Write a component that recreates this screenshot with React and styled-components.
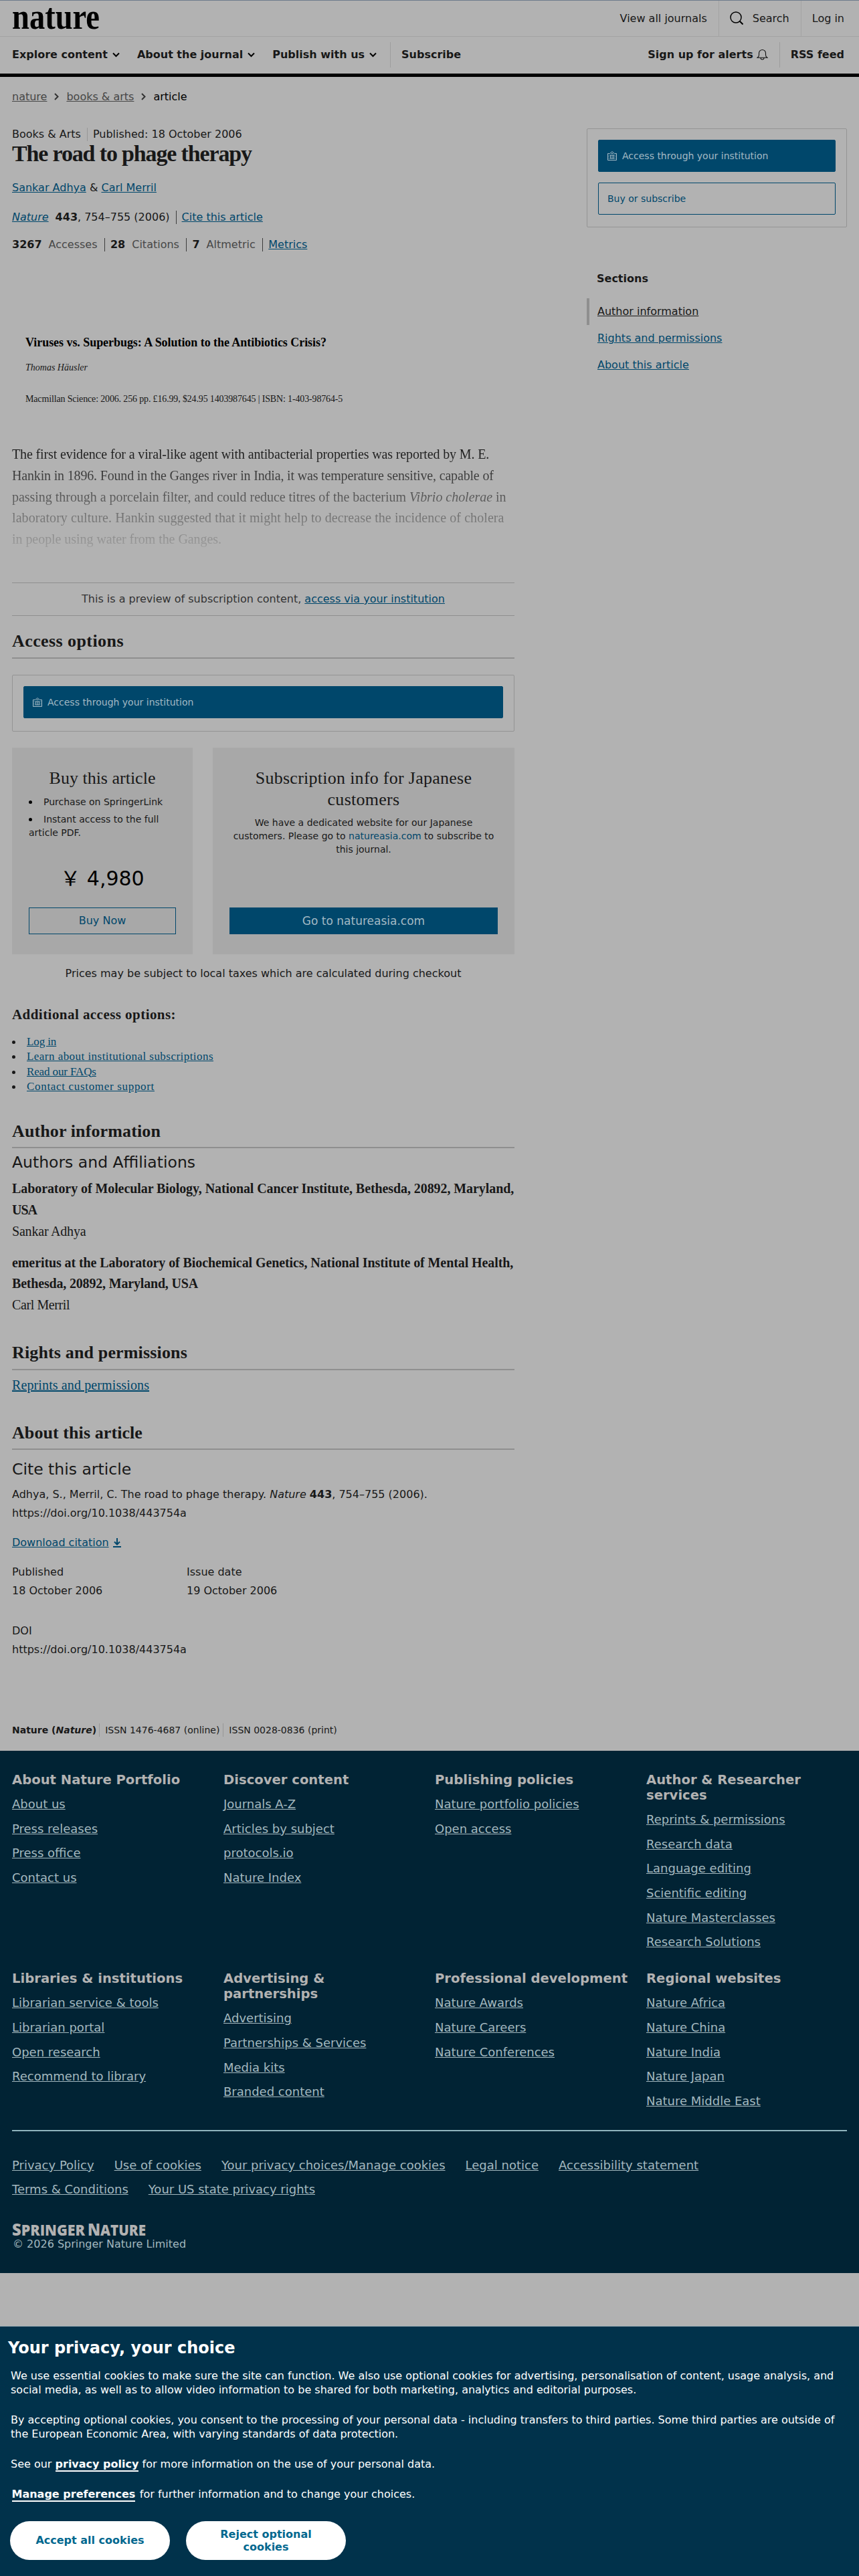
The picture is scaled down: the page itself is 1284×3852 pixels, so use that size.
import React from 'react';
import styled, { createGlobalStyle, css } from 'styled-components';

const GlobalStyle = createGlobalStyle`
  * {
    box-sizing: border-box;
  }
  body {
    height: 100vh;
    margin: 0;
    overflow: hidden;
    background: #b2b2b2;
    color: #181818;
    font-family: 'DejaVu Sans', sans-serif;
    font-size: 16px;
  }
  h1, h2, h3, h4, p, ul {
    margin: 0;
    padding: 0;
  }
  ul {
    list-style: none;
  }
`;

const serif = css`
  font-family: 'Liberation Serif', serif;
`;

const Link = styled.a`
  color: #00476b;
  text-decoration: ${({ $plain }) => ($plain ? 'none' : 'underline')};
`;

const Header = styled.header`
  border-top: 1px solid #6d7c8c;
  border-bottom: 5px solid #000;
`;

const TopBar = styled.div`
  display: flex;
  justify-content: space-between;
  height: 54px;
  padding-left: 18px;
  border-bottom: 1px solid #a3a3a3;
`;

const Logo = styled.svg`
  display: block;
  width: 136px;
  height: 50px;
`;

const TopLinks = styled.div`
  display: flex;
`;

const TopLink = styled.div`
  display: flex;
  align-items: center;
  gap: 14px;
  padding: 0 ${({ $last }) => ($last ? 22 : 17)}px 0 ${({ $first }) => ($first ? 0 : 16)}px;
  padding-bottom: 1px;
  border-left: ${({ $first }) => ($first ? 'none' : '1px solid #a3a3a3')};
`;

const NavBar = styled.nav`
  display: flex;
  align-items: center;
  height: 55px;
  padding: 0 22px 2px 18px;
  font-weight: bold;
`;

const NavItem = styled.div`
  display: flex;
  align-items: center;
  gap: ${({ $gap }) => $gap || 7}px;
  margin-right: ${({ $mr }) => $mr || 0}px;
  margin-left: ${({ $push }) => ($push ? 'auto' : 0)};
`;

const NavDivider = styled.span`
  width: 1px;
  height: 38px;
  margin-right: 16px;
  background: #9d9d9d;
`;

const Breadcrumbs = styled.div`
  display: flex;
  align-items: center;
  height: 24px;
  margin: 17px 18px 0;
  color: #000;

  a {
    color: #474747;
    text-decoration: underline;
  }
  svg {
    margin: 0 11px;
  }
`;

const Page = styled.div`
  display: grid;
  grid-template-columns: 751px 389px;
  justify-content: space-between;
  margin: 33px 18px 0;
`;

const MetaRow = styled.div`
  display: flex;
  align-items: center;
  line-height: ${({ $lh }) => $lh || 24}px;
  margin-top: ${({ $mt }) => $mt || 0}px;
  font-size: ${({ $size }) => $size || 16}px;
  white-space: pre;
`;

const Bar = styled.i`
  width: 1px;
  height: 20px;
  margin: 0 8px 0 ${({ $gap }) => $gap || 9}px;
  background: ${({ $light }) => ($light ? '#979797' : '#3c3c3c')};
`;

const Muted = styled.span`
  color: #474747;
  margin: 0 1.5px 0 10px;
`;

const Volume = styled.b`
  margin-left: 10px;
`;

const Title = styled.h1`
  ${serif}
  font-size: 34px;
  line-height: 36px;
  letter-spacing: -1.15px;
  white-space: nowrap;
`;

const Authors = styled.p`
  line-height: 24px;
  margin-top: 21px;
`;

const BookBox = styled.div`
  ${serif}
  margin-top: 122px;
  padding-left: 20px;
`;

const BookTitle = styled.h2`
  font-size: 18px;
  line-height: 24px;
  letter-spacing: -0.05px;
  color: #000;
`;

const BookLine = styled.p`
  font-size: ${({ $size }) => $size}px;
  line-height: 20px;
  margin-top: ${({ $mt }) => $mt}px;
  font-style: ${({ $italic }) => ($italic ? 'italic' : 'normal')};
  letter-spacing: ${({ $ls }) => $ls || 0}px;
`;

// the text fades out towards the paywall
const Preview = styled.p`
  ${serif}
  margin-top: 57px;
  font-size: 20px;
  line-height: 31.8px;
  background: linear-gradient(#181818, #181818 4%, #b2b2b2 112%);
  -webkit-background-clip: text;
  background-clip: text;
  color: transparent;
`;

const Line = styled.span`
  display: block;
  letter-spacing: ${({ $ls }) => $ls || 0}px;
  white-space: nowrap;
`;

const PreviewNote = styled.p`
  height: 50px;
  margin-top: 48px;
  border-top: 1px solid #8f8f8f;
  border-bottom: 1px solid #8f8f8f;
  line-height: 48px;
  text-align: center;
  color: #333;
`;

const SectionTitle = styled.h2`
  ${serif}
  margin-top: ${({ $mt }) => $mt}px;
  padding-bottom: ${({ $pb }) => $pb || 9}px;
  border-bottom: 2px solid #8f8f8f;
  font-size: 26px;
  line-height: 30px;
  letter-spacing: ${({ $ls }) => $ls || 0}px;
`;

const SubTitle = styled.h3`
  margin-top: ${({ $mt }) => $mt}px;
  font-size: 23.5px;
  font-weight: normal;
  line-height: 30px;
`;

const AccessBox = styled.div`
  display: flex;
  flex-direction: column;
  gap: 16px;
  margin-top: ${({ $mt }) => $mt}px;
  padding: 16px 16px ${({ $pb }) => $pb || 19}px;
  border: 1px solid #949494;
  border-radius: 2px;
`;

const AccessButton = styled.a`
  display: flex;
  align-items: center;
  gap: 8px;
  height: 48px;
  padding: 0 13px;
  border: 1px solid #00476b;
  border-radius: 2px;
  background: ${({ $outline }) => ($outline ? 'transparent' : '#00476b')};
  color: ${({ $outline }) => ($outline ? '#00476b' : '#a3b9c4')};
  font-size: 14px;
`;

const Offers = styled.div`
  display: grid;
  grid-template-columns: 270px 451px;
  justify-content: space-between;
  height: 309px;
  margin-top: 24px;
`;

const Offer = styled.div`
  display: flex;
  flex-direction: column;
  padding: 30px 25px;
  background: #a8a8a8;
  font-size: 14px;
  line-height: 20px;
  text-align: center;
`;

const OfferTitle = styled.h3`
  ${serif}
  font-size: 26px;
  font-weight: normal;
  line-height: 32px;
  letter-spacing: ${({ $ls }) => $ls || 0}px;
`;

const OfferList = styled.ul`
  margin-top: 9px;
  text-align: left;

  li {
    margin-bottom: 6px;
  }
  li::before {
    content: '';
    display: inline-block;
    width: 5px;
    height: 5px;
    margin-right: 17px;
    border-radius: 50%;
    background: #000;
    vertical-align: 2px;
  }
`;

const OfferText = styled.p`
  margin-top: 8px;
`;

const Price = styled.div`
  margin-top: 33px;
  color: #000;
  font-family: 'DejaVu Sans', 'Noto Sans CJK JP', sans-serif;
  font-size: 30px;
  line-height: 40px;
`;

const OfferButton = styled.button`
  height: 40px;
  margin-top: auto;
  border: 1px solid #00476b;
  background: ${({ $solid }) => ($solid ? '#00476b' : 'transparent')};
  color: ${({ $solid }) => ($solid ? '#a3b9c4' : '#00476b')};
  font-family: inherit;
  font-size: ${({ $solid }) => ($solid ? 17 : 16)}px;
`;

const PriceNote = styled.p`
  margin-top: 17px;
  line-height: 24px;
  text-align: center;
`;

const MoreTitle = styled.h3`
  ${serif}
  margin-top: 36px;
  font-size: 21px;
  line-height: 26px;
  letter-spacing: 0.45px;
`;

const MoreList = styled.ul`
  ${serif}
  margin-top: 17px;
  font-size: 17px;
  line-height: 22.3px;
`;

const MoreItem = styled.li`
  letter-spacing: ${({ $ls }) => $ls}px;

  &::before {
    content: '';
    display: inline-block;
    width: 5px;
    height: 5px;
    margin-right: 17px;
    border-radius: 50%;
    background: #181818;
    vertical-align: 2px;
  }
`;

const Affiliation = styled.div`
  ${serif}
  margin-top: ${({ $mt }) => $mt}px;
  font-size: 20px;
  line-height: 31.8px;
`;

const SerifText = styled.p`
  ${serif}
  margin-top: 6px;
  font-size: 20px;
  line-height: 32px;
  letter-spacing: 0.12px;
`;

const Text = styled.p`
  margin-top: ${({ $mt }) => $mt}px;
  line-height: 28px;
`;

const DownloadRow = styled.p`
  display: flex;
  align-items: center;
  gap: 6px;
  margin-top: 18px;
  line-height: 24px;
`;

const History = styled.div`
  display: grid;
  grid-template-columns: 261px 1fr;
  row-gap: 32px;
  margin-top: 18px;
  line-height: 28px;
`;

const Contents = styled.aside`
  margin-top: 65px;

  h2 {
    margin-left: 15px;
    font-size: 16px;
    line-height: 24px;
  }
  ul {
    margin-top: 17px;
  }
`;

const ContentsItem = styled.li`
  padding-left: 12px;
  border-left: 4px solid ${({ $active }) => ($active ? '#8f8f8f' : 'transparent')};
  line-height: 40px;

  a {
    color: ${({ $active }) => ($active ? '#181818' : '#00476b')};
  }
`;

const Footer = styled.footer`
  margin-top: 21px;
  padding: 32px 18px 33px;
  background: #012334;
  color: #a3b8bf;
  font-size: 18px;

  a {
    text-decoration: underline;
  }
`;

const FooterGrid = styled.div`
  display: grid;
  grid-template-columns: repeat(4, 316px);
  row-gap: 24px;
`;

const FooterColumn = styled.div`
  padding-right: 24px;
  line-height: 36.7px;

  h3 {
    margin-bottom: 7px;
    color: #b2b2b2;
    font-size: 19.6px;
    line-height: 23px;
  }
`;

const FooterLinks = styled.div`
  display: flex;
  flex-wrap: wrap;
  column-gap: 30px;
  margin-top: 24px;
  padding: 33px 180px 0 0;
  border-top: 2px solid #8fb4bd;
  line-height: 36.6px;
`;

const Copyright = styled.p`
  padding-left: 1px;
  font-size: 16px;
  line-height: 20px;
`;

const SpringerLogo = styled.svg`
  display: block;
  width: 204px;
  height: 24px;
  margin-top: 29px;
`;

const Banner = styled.section`
  margin-top: 79px;
  height: 374px;
  padding: 16px 24px 0 16px;
  border-top: 1px solid #97a9b3;
  background: #01324b;
  color: #fff;

  h2 {
    margin: 0 0 15px -4px;
    font-size: 24px;
    line-height: 32px;
  }
  p {
    margin-bottom: 24px;
    line-height: 21px;
  }
  a {
    border-bottom: 2px solid #fff;
    font-weight: bold;
  }
`;

const ManageLink = styled.a`
  margin: 0 1.5px;
`;

const BannerActions = styled.div`
  display: flex;
  gap: 24px;
  margin: 30px 0 0 -1px;
`;

const BannerButton = styled.button`
  width: 239px;
  height: 58px;
  padding: 0 36px;
  border: 0;
  border-radius: 29px;
  background: #fff;
  color: #01688f;
  font-family: inherit;
  font-size: 16px;
  font-weight: bold;
  line-height: 19px;
`;

const Chevron = ({ right }) => (
  <svg width={right ? 7 : 11} height="11" viewBox={right ? '0 0 7 11' : '0 0 11 11'} fill="none" stroke={right ? '#333' : '#000'} strokeWidth="2">
    <path d={right ? 'M1 1l4.5 4.5L1 10' : 'M1 3.5l4.5 4.5L10 3.5'} />
  </svg>
);

const SearchIcon = () => (
  <svg width="20" height="20" viewBox="0 0 20 20" fill="none" stroke="#000" strokeWidth="1.5">
    <circle cx="9" cy="9" r="8" />
    <path d="M14.5 14.5l5 5" strokeWidth="2" />
  </svg>
);

const BellIcon = () => (
  <svg width="17" height="17" viewBox="0 0 17 17" fill="none" stroke="#111" strokeWidth="1.1">
    <path d="M1 13.2c1.7-1 2.5-2 2.5-4V6.5a5 5 0 0 1 10 0v2.7c0 2 .8 3 2.5 4z" />
    <path d="M6 13.5a2.5 2.5 0 0 0 5 0" />
  </svg>
);

const InstitutionIcon = () => (
  <svg width="14" height="14" viewBox="0 0 14 14" fill="none" stroke="#a3b9c4" strokeWidth="1">
    <path d="M.5 3.5h3L7 .7l3.5 2.8h3v10H.5z M3.5 6h7M4.5 6v5M7 6v5M9.5 6v5M3.5 11h7M5.5 3.5h3M1.5 6h1M1.5 8.5h1M1.5 11h1M11.5 6h1M11.5 8.5h1M11.5 11h1" />
  </svg>
);

const DownloadIcon = () => (
  <svg width="12" height="14" viewBox="0 0 12 14" fill="none" stroke="#00476b" strokeWidth="2">
    <path d="M6 0v9M2 5.5l4 4 4-4M0 13h12" />
  </svg>
);

const footerColumns = [
  ['About Nature Portfolio', ['About us', 'Press releases', 'Press office', 'Contact us']],
  ['Discover content', ['Journals A-Z', 'Articles by subject', 'protocols.io', 'Nature Index']],
  ['Publishing policies', ['Nature portfolio policies', 'Open access']],
  [
    'Author & Researcher services',
    ['Reprints & permissions', 'Research data', 'Language editing', 'Scientific editing', 'Nature Masterclasses', 'Research Solutions'],
  ],
  ['Libraries & institutions', ['Librarian service & tools', 'Librarian portal', 'Open research', 'Recommend to library']],
  ['Advertising & partnerships', ['Advertising', 'Partnerships & Services', 'Media kits', 'Branded content']],
  ['Professional development', ['Nature Awards', 'Nature Careers', 'Nature Conferences']],
  ['Regional websites', ['Nature Africa', 'Nature China', 'Nature India', 'Nature Japan', 'Nature Middle East']],
];

const legalLinks = [
  'Privacy Policy',
  'Use of cookies',
  'Your privacy choices/Manage cookies',
  'Legal notice',
  'Accessibility statement',
  'Terms & Conditions',
  'Your US state privacy rights',
];

const moreLinks = [
  { label: 'Log in', ls: -0.1 },
  { label: 'Learn about institutional subscriptions', ls: 0.46 },
  { label: 'Read our FAQs', ls: -0.13 },
  { label: 'Contact customer support', ls: 0.68 },
];

const App = () => {
  return (
    <>
      <GlobalStyle />
      <Header>
        <TopBar>
          <Logo viewBox="0 0 136 50">
            <text x="0" y="41.5" textLength="131" lengthAdjust="spacingAndGlyphs" fontFamily="Liberation Serif, serif" fontWeight="bold" fontSize="55">
              nature
            </text>
          </Logo>
          <TopLinks>
            <TopLink $first>View all journals</TopLink>
            <TopLink>
              <SearchIcon />
              Search
            </TopLink>
            <TopLink $last>Log in</TopLink>
          </TopLinks>
        </TopBar>
        <NavBar>
          <NavItem $mr={26}>Explore content <Chevron /></NavItem>
          <NavItem $mr={26}>About the journal <Chevron /></NavItem>
          <NavItem $mr={20}>Publish with us <Chevron /></NavItem>
          <NavDivider />
          <NavItem>Subscribe</NavItem>
          <NavItem $push $gap={5} $mr={17}>Sign up for alerts <BellIcon /></NavItem>
          <NavDivider />
          <NavItem>RSS feed</NavItem>
        </NavBar>
      </Header>

      <Breadcrumbs>
        <a>nature</a>
        <Chevron right />
        <a>books &amp; arts</a>
        <Chevron right />
        <span>article</span>
      </Breadcrumbs>

      <Page>
        <main>
          <MetaRow $lh={22} $mt={1}>
            Books &amp; Arts
            <Bar $light />
            Published: 18 October 2006
          </MetaRow>
          <Title>The road to phage therapy</Title>
          <Authors>
            <Link>Sankar Adhya</Link> &amp; <Link>Carl Merril</Link>
          </Authors>
          <MetaRow $mt={20}>
            <Link><i>Nature</i></Link><Volume>443</Volume>, 754–755 (2006)
            <Bar />
            <Link>Cite this article</Link>
          </MetaRow>
          <MetaRow $mt={17}>
            <b>3267</b><Muted>Accesses</Muted>
            <Bar />
            <b>28</b><Muted>Citations</Muted>
            <Bar />
            <b>7</b><Muted>Altmetric</Muted>
            <Bar />
            <Link>Metrics</Link>
          </MetaRow>

          <BookBox>
            <BookTitle>Viruses vs. Superbugs: A Solution to the Antibiotics Crisis?</BookTitle>
            <BookLine $size={14} $mt={16} $italic>Thomas Häusler</BookLine>
            <BookLine $size={14} $mt={27} $ls={-0.15}>
              Macmillan Science: 2006. 256 pp. £16.99, $24.95 1403987645 | ISBN: 1-403-98764-5
            </BookLine>
          </BookBox>

          <Preview>
            <Line $ls={-0.13}>The first evidence for a viral-like agent with antibacterial properties was reported by M. E.</Line>
            <Line $ls={-0.17}>Hankin in 1896. Found in the Ganges river in India, it was temperature sensitive, capable of</Line>
            <Line $ls={-0.03}>passing through a porcelain filter, and could reduce titres of the bacterium <i>Vibrio cholerae</i> in</Line>
            <Line $ls={0.075}>laboratory culture. Hankin suggested that it might help to decrease the incidence of cholera</Line>
            <Line $ls={-0.05}>in people using water from the Ganges.</Line>
          </Preview>

          <PreviewNote>
            This is a preview of subscription content, <Link>access via your institution</Link>
          </PreviewNote>

          <SectionTitle $mt={23} $ls={0.42}>Access options</SectionTitle>
          <AccessBox $mt={24}>
            <AccessButton><InstitutionIcon />Access through your institution</AccessButton>
          </AccessBox>
          <Offers>
            <Offer>
              <OfferTitle>Buy this article</OfferTitle>
              <OfferList>
                <li>Purchase on SpringerLink</li>
                <li>Instant access to the full article PDF.</li>
              </OfferList>
              <Price>￥ 4,980</Price>
              <OfferButton>Buy Now</OfferButton>
            </Offer>
            <Offer>
              <OfferTitle $ls={0.27}>Subscription info for Japanese customers</OfferTitle>
              <OfferText>
                We have a dedicated website for our Japanese customers. Please go to{' '}
                <Link $plain>natureasia.com</Link> to subscribe to this journal.
              </OfferText>
              <OfferButton $solid>Go to natureasia.com</OfferButton>
            </Offer>
          </Offers>
          <PriceNote>Prices may be subject to local taxes which are calculated during checkout</PriceNote>

          <MoreTitle>Additional access options:</MoreTitle>
          <MoreList>
            {moreLinks.map(({ label, ls }) => (
              <MoreItem key={label} $ls={ls}><Link>{label}</Link></MoreItem>
            ))}
          </MoreList>

          <SectionTitle $mt={41} $ls={0.12} $pb={8}>Author information</SectionTitle>
          <SubTitle $mt={6}>Authors and Affiliations</SubTitle>
          <Affiliation $mt={9}>
            <b>
              <Line $ls={-0.08}>Laboratory of Molecular Biology, National Cancer Institute, Bethesda, 20892, Maryland,</Line>
              <Line $ls={-1}>USA</Line>
            </b>
            <Line $ls={-0.2}>Sankar Adhya</Line>
          </Affiliation>
          <Affiliation $mt={15}>
            <b>
              <Line $ls={-0.09}>emeritus at the Laboratory of Biochemical Genetics, National Institute of Mental Health,</Line>
              <Line $ls={-0.18}>Bethesda, 20892, Maryland, USA</Line>
            </b>
            <Line $ls={-0.4}>Carl Merril</Line>
          </Affiliation>

          <SectionTitle $mt={40} $ls={0.15}>Rights and permissions</SectionTitle>
          <SerifText><Link>Reprints and permissions</Link></SerifText>

          <SectionTitle $mt={41} $ls={0.08} $pb={8}>About this article</SectionTitle>
          <SubTitle $mt={14}>Cite this article</SubTitle>
          <Text $mt={9}>
            Adhya, S., Merril, C. The road to phage therapy. <i>Nature</i> <b>443</b>, 754–755 (2006).
            <br />
            https://doi.org/10.1038/443754a
          </Text>
          <DownloadRow><Link>Download citation</Link><DownloadIcon /></DownloadRow>
          <History>
            <div>Published<br />18 October 2006</div>
            <div>Issue date<br />19 October 2006</div>
            <div>DOI<br />https://doi.org/10.1038/443754a</div>
          </History>

          <MetaRow $mt={96} $lh={20} $size={14}>
            <b>Nature (<i>Nature</i>)</b>
            <Bar $light $gap={4} />
            ISSN 1476-4687 (online)
            <Bar $light $gap={5} />
            ISSN 0028-0836 (print)
          </MetaRow>
        </main>

        <div>
          <AccessBox $mt={3} $pb={18}>
            <AccessButton><InstitutionIcon />Access through your institution</AccessButton>
            <AccessButton $outline>Buy or subscribe</AccessButton>
          </AccessBox>
          <Contents>
            <h2>Sections</h2>
            <ul>
              <ContentsItem $active><Link>Author information</Link></ContentsItem>
              <ContentsItem><Link>Rights and permissions</Link></ContentsItem>
              <ContentsItem><Link>About this article</Link></ContentsItem>
            </ul>
          </Contents>
        </div>
      </Page>

      <Footer>
        <FooterGrid>
          {footerColumns.map(([heading, links]) => (
            <FooterColumn key={heading}>
              <h3>{heading}</h3>
              <ul>
                {links.map((label) => (
                  <li key={label}><a>{label}</a></li>
                ))}
              </ul>
            </FooterColumn>
          ))}
        </FooterGrid>
        <FooterLinks>
          {legalLinks.map((label) => (
            <a key={label}>{label}</a>
          ))}
        </FooterLinks>
        <SpringerLogo viewBox="0 0 204 24" fill="#b2b2b2" fontFamily="Open Sans, sans-serif" fontWeight="800">
          <text x="0" y="20.5" textLength="109" lengthAdjust="spacingAndGlyphs" fontSize="25">
            S<tspan fontSize="22.5">PRINGER</tspan>
          </text>
          <text x="113" y="20.5" textLength="87" lengthAdjust="spacingAndGlyphs" fontSize="25">
            N<tspan fontSize="22.5">ATURE</tspan>
          </text>
        </SpringerLogo>
        <Copyright>© 2026 Springer Nature Limited</Copyright>
      </Footer>

      <Banner>
        <h2>Your privacy, your choice</h2>
        <p>
          We use essential cookies to make sure the site can function. We also use optional cookies for advertising, personalisation of content, usage analysis, and social media, as well as to allow video information to be shared for both marketing, analytics and editorial purposes.
        </p>
        <p>
          By accepting optional cookies, you consent to the processing of your personal data - including transfers to third parties. Some third parties are outside of the European Economic Area, with varying standards of data protection.
        </p>
        <p>See our <a>privacy policy</a> for more information on the use of your personal data.</p>
        <p><ManageLink>Manage preferences</ManageLink> for further information and to change your choices.</p>
        <BannerActions>
          <BannerButton>Accept all cookies</BannerButton>
          <BannerButton>Reject optional cookies</BannerButton>
        </BannerActions>
      </Banner>
    </>
  );
};

export default App;
